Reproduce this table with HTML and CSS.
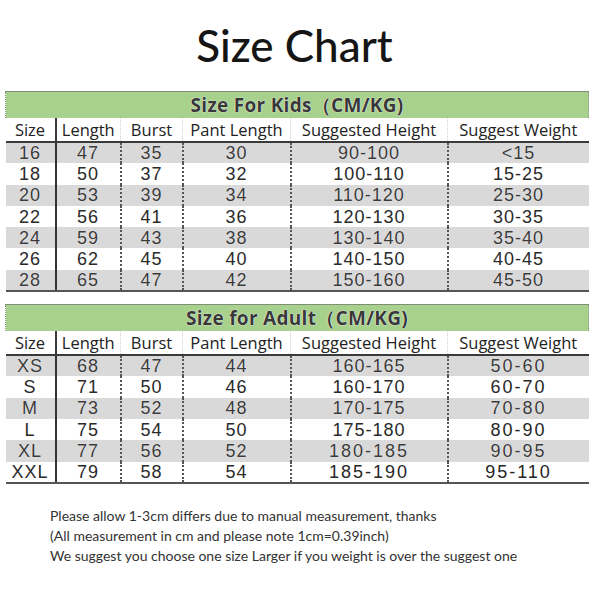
FILE: index.html
```html
<!DOCTYPE html>
<html>
<head>
<meta charset="utf-8">
<link rel="stylesheet" href="styles.css">
</head>
<body>
<div class="page">
  <h1 class="title">Size Chart</h1>

  <table class="chart kids">
    <colgroup>
      <col class="c1"><col class="c2"><col class="c3"><col class="c4"><col class="c5"><col class="c6">
    </colgroup>
    <thead>
      <tr class="band"><th colspan="6">Size For Kids（CM/KG)</th></tr>
      <tr class="head"><th>Size</th><th>Length</th><th>Burst</th><th>Pant Length</th><th>Suggested Height</th><th>Suggest Weight</th></tr>
    </thead>
    <tbody>
      <tr class="grey"><td>16</td><td>47</td><td>35</td><td>30</td><td>90-100</td><td>&lt;15</td></tr>
      <tr><td>18</td><td>50</td><td>37</td><td>32</td><td>100-110</td><td>15-25</td></tr>
      <tr class="grey"><td>20</td><td>53</td><td>39</td><td>34</td><td>110-120</td><td>25-30</td></tr>
      <tr><td>22</td><td>56</td><td>41</td><td>36</td><td>120-130</td><td>30-35</td></tr>
      <tr class="grey"><td>24</td><td>59</td><td>43</td><td>38</td><td>130-140</td><td>35-40</td></tr>
      <tr><td>26</td><td>62</td><td>45</td><td>40</td><td>140-150</td><td>40-45</td></tr>
      <tr class="grey"><td>28</td><td>65</td><td>47</td><td>42</td><td>150-160</td><td>45-50</td></tr>
    </tbody>
  </table>

  <table class="chart adult">
    <colgroup>
      <col class="c1"><col class="c2"><col class="c3"><col class="c4"><col class="c5"><col class="c6">
    </colgroup>
    <thead>
      <tr class="band"><th colspan="6">Size for Adult（CM/KG)</th></tr>
      <tr class="head"><th>Size</th><th>Length</th><th>Burst</th><th>Pant Length</th><th>Suggested Height</th><th>Suggest Weight</th></tr>
    </thead>
    <tbody>
      <tr class="grey"><td>XS</td><td>68</td><td>47</td><td>44</td><td>160-165</td><td class="thin">50-60</td></tr>
      <tr><td>S</td><td>71</td><td>50</td><td>46</td><td>160-170</td><td class="thin">60-70</td></tr>
      <tr class="grey"><td>M</td><td>73</td><td>52</td><td>48</td><td>170-175</td><td class="thin">70-80</td></tr>
      <tr><td>L</td><td>75</td><td>54</td><td>50</td><td>175-180</td><td class="thin">80-90</td></tr>
      <tr class="grey"><td>XL</td><td>77</td><td>56</td><td>52</td><td class="thin">180-185</td><td class="thin">90-95</td></tr>
      <tr><td>XXL</td><td>79</td><td>58</td><td>54</td><td class="thin">185-190</td><td class="thin">95-110</td></tr>
    </tbody>
  </table>

  <div class="notes">
    <p>Please allow 1-3cm differs due to manual measurement, thanks</p>
    <p>(All measurement in cm and please note 1cm=0.39inch)</p>
    <p>We suggest you choose one size Larger if you weight is over the suggest one</p>
  </div>
</div>
</body>
</html>
```

FILE: styles.css
```css
html, body {
  margin: 0;
  padding: 0;
  background: #ffffff;
}

.page {
  width: 600px;
  padding: 0 12px 0 5px;
  box-sizing: border-box;
  font-family: "Liberation Sans", Arial, sans-serif;
  color: #2a2a2a;
}

.title {
  margin: 0;
  padding-top: 18px;
  height: 91px;
  box-sizing: border-box;
  text-align: center;
  font-family: Lato, "Open Sans", sans-serif;
  font-weight: 500;
  font-size: 44px;
  line-height: 54px;
  color: #151515;
  padding-right: 4px;
}

.chart {
  width: 583px;
  border-collapse: collapse;
  table-layout: fixed;
}

.c1 { width: 50px; }
.c2 { width: 65px; }
.c3 { width: 62px; }
.c4 { width: 108px; }
.c5 { width: 157px; }
.c6 { width: 141px; }

.band th {
  height: 26px;
  padding: 0;
  background: #a9d18e;
  border-top: 1px solid #7f8f74;
  border-left: 1px dotted #8a9a80;
  border-right: 1px dotted #8a9a80;
  font-family: "Open Sans", sans-serif;
  font-weight: 700;
  font-size: 19px;
  line-height: 26px;
  color: #383838;
  text-align: center;
  letter-spacing: 0.3px;
  text-shadow: 0 0 1px #ffffff, 0 0 1px #ffffff;
}

.head th {
  height: 23px;
  padding: 0;
  font-family: "Open Sans", sans-serif;
  font-weight: 500;
  font-size: 16.5px;
  line-height: 23px;
  color: #222222;
  text-align: center;
  border-bottom: 2px solid #3a3a3a;
  border-left: 1px dotted #cfcfcf;
  white-space: nowrap;
}

.head th:first-child {
  border-left: none;
}

.head th:nth-child(2) {
  border-left: 2px solid #3a3a3a;
}

.chart tbody tr {
  height: 21.3px;
}

.chart td {
  padding: 0;
  text-align: center;
  font-size: 18px;
  line-height: 20px;
  letter-spacing: 1px;
  color: #2a2a2a;
  border-left: 2px dotted #555555;
}

.chart td:first-child {
  border-left: none;
}

.chart td:nth-child(2) {
  border-left: 2px solid #333333;
}

.chart tr.grey td {
  background: #d9d9d9;
  color: #3a3a3a;
  text-shadow: 0 0 1px #ffffff;
}

.chart tbody tr:last-child td {
  border-bottom: 2px solid #555555;
}

.chart td.thin {
  font-family: "Liberation Sans", Arial, sans-serif;
  font-size: 18px;
  letter-spacing: 2px;
  text-shadow: none;
  color: #262626;
}

.adult {
  margin-top: 12px;
}

.notes {
  margin-top: 22px;
  padding-left: 45px;
  font-family: Lato, "Open Sans", sans-serif;
  font-size: 14px;
  line-height: 20px;
  color: #333333;
}

.notes p {
  margin: 0;
}
```
